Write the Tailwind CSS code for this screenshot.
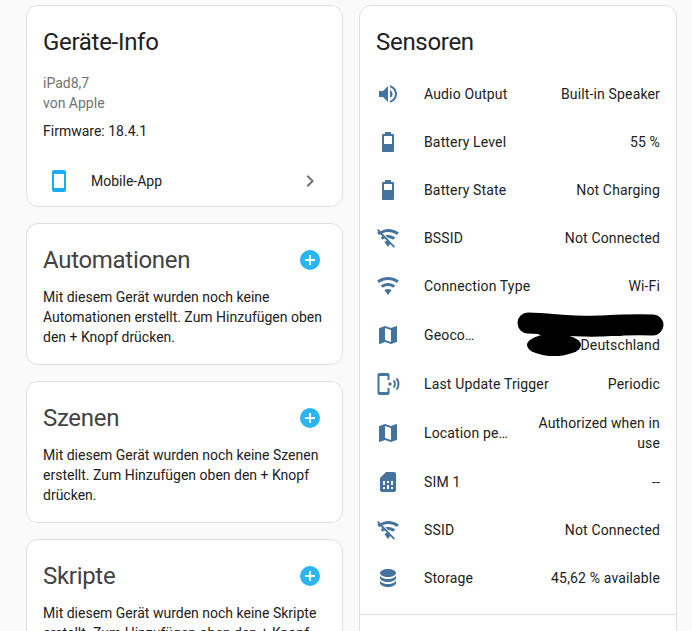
<!DOCTYPE html>
<html lang="de">
<head>
  <meta charset="UTF-8">
  <title>Geräte-Info</title>
  <script src="https://cdn.jsdelivr.net/npm/@tailwindcss/browser@4"></script>
</head>
<body class="bg-[#fafafa] h-[631px] overflow-hidden font-['Roboto',sans-serif] text-sm leading-5 text-[#212121]">
  <div class="grid grid-cols-[317px_318px] gap-4 pl-[26px] pt-[5px] items-start">

    <!-- Left column -->
    <div class="flex flex-col gap-4">
      <section class="bg-white border border-[#e0e0e0] rounded-xl h-[202px] px-4 pt-5">
        <h2 class="text-2xl leading-8 tracking-[-0.3px] text-[#212121]">Geräte-Info</h2>
        <div class="mt-[15px] text-[#727272]">iPad8,7</div>
        <div class="text-[#727272]">von Apple</div>
        <div class="mt-2">Firmware: 18.4.1</div>
        <div class="flex items-center h-12 mt-4">
          <svg class="w-6 h-6 ml-1 fill-[#18aef5]" viewBox="0 0 24 24"><path d="M17,19H7V5H17M17,1H7C5.89,1 5,1.89 5,3V21A2,2 0 0,0 7,23H17A2,2 0 0,0 19,21V3C19,1.89 18.1,1 17,1Z"/></svg>
          <span class="ml-5 flex-1">Mobile-App</span>
          <svg class="w-6 h-6 mr-1 fill-[#727272]" viewBox="0 0 24 24"><path d="M8.59,16.58L13.17,12L8.59,7.41L10,6L16,12L10,18L8.59,16.58Z"/></svg>
        </div>
      </section>

      <section class="bg-white border border-[#e0e0e0] rounded-xl h-[142px] px-4 pt-5">
        <div class="flex items-center justify-between">
          <h2 class="text-2xl leading-8 tracking-[-0.3px] text-[#424242]">Automationen</h2>
          <svg class="w-6 h-6 mr-1 fill-[#29b6f6]" viewBox="0 0 24 24"><circle cx="12" cy="12" r="10"/><path class="fill-white" d="M11 7h2v4h4v2h-4v4h-2v-4H7v-2h4z"/></svg>
        </div>
        <p class="mt-[11px]">Mit diesem Gerät wurden noch keine Automationen erstellt. Zum Hinzufügen oben den + Knopf drücken.</p>
      </section>

      <section class="bg-white border border-[#e0e0e0] rounded-xl h-[142px] px-4 pt-5">
        <div class="flex items-center justify-between">
          <h2 class="text-2xl leading-8 tracking-[-0.3px] text-[#424242]">Szenen</h2>
          <svg class="w-6 h-6 mr-1 fill-[#29b6f6]" viewBox="0 0 24 24"><circle cx="12" cy="12" r="10"/><path class="fill-white" d="M11 7h2v4h4v2h-4v4h-2v-4H7v-2h4z"/></svg>
        </div>
        <p class="mt-[11px]">Mit diesem Gerät wurden noch keine Szenen erstellt. Zum Hinzufügen oben den + Knopf drücken.</p>
      </section>

      <section class="bg-white border border-[#e0e0e0] rounded-xl h-[142px] px-4 pt-5">
        <div class="flex items-center justify-between">
          <h2 class="text-2xl leading-8 tracking-[-0.3px] text-[#424242]">Skripte</h2>
          <svg class="w-6 h-6 mr-1 fill-[#29b6f6]" viewBox="0 0 24 24"><circle cx="12" cy="12" r="10"/><path class="fill-white" d="M11 7h2v4h4v2h-4v4h-2v-4H7v-2h4z"/></svg>
        </div>
        <p class="mt-[11px]">Mit diesem Gerät wurden noch keine Skripte erstellt. Zum Hinzufügen oben den + Knopf drücken.</p>
      </section>
    </div>

    <!-- Sensoren -->
    <section class="relative bg-white border border-[#e0e0e0] rounded-xl h-[700px] pt-5">
      <h2 class="text-2xl leading-8 px-4 tracking-[-0.3px] text-[#212121]">Sensoren</h2>
      <div class="mt-3 px-4 tracking-[0.15px]">
        <div class="flex items-center min-h-12">
          <svg class="w-6 h-6 shrink-0 fill-[#44739e]" viewBox="0 0 24 24"><path d="M14,3.23V5.29C16.89,6.15 19,8.83 19,12C19,15.17 16.89,17.84 14,18.7V20.77C18,19.86 21,16.28 21,12C21,7.72 18,4.14 14,3.23M16.5,12C16.5,10.23 15.5,8.71 14,7.97V16C15.5,15.29 16.5,13.76 16.5,12M3,9V15H7L12,20V4L7,9H3Z"/></svg>
          <span class="ml-6 flex-1">Audio Output</span>
          <span class="text-right">Built-in Speaker</span>
        </div>
        <div class="flex items-center min-h-12">
          <svg class="w-6 h-6 shrink-0 fill-[#44739e]" viewBox="0 0 24 24"><path d="M16,14H8V6H16M16.67,4H15V2H9V4H7.33A1.33,1.33 0 0,0 6,5.33V20.67C6,21.4 6.6,22 7.33,22H16.67C17.41,22 18,21.41 18,20.67V5.33C18,4.6 17.4,4 16.67,4Z"/></svg>
          <span class="ml-6 flex-1">Battery Level</span>
          <span class="text-right">55 %</span>
        </div>
        <div class="flex items-center min-h-12">
          <svg class="w-6 h-6 shrink-0 fill-[#44739e]" viewBox="0 0 24 24"><path d="M16,12H8V6H16M16.67,4H15V2H9V4H7.33A1.33,1.33 0 0,0 6,5.33V20.67C6,21.4 6.6,22 7.33,22H16.67C17.41,22 18,21.41 18,20.67V5.33C18,4.6 17.4,4 16.67,4Z"/></svg>
          <span class="ml-6 flex-1">Battery State</span>
          <span class="text-right">Not Charging</span>
        </div>
        <div class="flex items-center min-h-12">
          <svg class="w-6 h-6 shrink-0 fill-[#44739e]" viewBox="0 0 24 24"><path d="M2.28,3L1,4.27L2.47,5.74C2.04,6 1.61,6.29 1.2,6.6L3,9C3.43,8.68 3.87,8.39 4.33,8.13L6.5,10.3C5.91,10.63 5.35,11 4.8,11.4L6.6,13.8C7.22,13.33 7.9,12.93 8.6,12.6L10.85,14.85C10,15.1 9.2,15.5 8.4,16L12,21L14.11,18.11L17.73,21.73L19,20.46L2.28,3M12,3C9.27,3 6.78,3.9 4.11,5.5L6.19,7.57C8,6.5 10,6 12,6C15.38,6 18.5,7.11 21,9L22.8,6.6C19.79,4.34 16.06,3 12,3M12,9C11.09,9 10.22,9.12 9.38,9.32L12.08,12C13.76,12 15.8,12.79 17.4,13.8L19.2,11.4C17.2,9.89 14.7,9 12,9Z"/></svg>
          <span class="ml-6 flex-1">BSSID</span>
          <span class="text-right">Not Connected</span>
        </div>
        <div class="flex items-center min-h-12">
          <svg class="w-6 h-6 shrink-0 fill-[#44739e]" viewBox="0 0 24 24"><path d="M12,21L15.6,16.2C14.6,15.45 13.35,15 12,15C10.65,15 9.4,15.45 8.4,16.2L12,21M12,3C7.95,3 4.21,4.34 1.2,6.6L3,9C5.5,7.12 8.62,6 12,6C15.38,6 18.5,7.12 21,9L22.8,6.6C19.79,4.34 16.05,3 12,3M12,9C9.3,9 6.81,9.89 4.8,11.4L6.6,13.8C8.1,12.67 9.97,12 12,12C14.03,12 15.9,12.67 17.4,13.8L19.2,11.4C17.19,9.89 14.7,9 12,9Z"/></svg>
          <span class="ml-6 flex-1">Connection Type</span>
          <span class="text-right">Wi-Fi</span>
        </div>
        <div class="flex items-center min-h-12 py-[5px]">
          <svg class="w-6 h-6 shrink-0 fill-[#44739e]" viewBox="0 0 24 24"><path d="M15,19L9,16.89V5L15,7.11M20.5,3C20.44,3 20.39,3 20.34,3L15,5.1L9,3L3.36,4.9C3.15,4.97 3,5.15 3,5.38V20.5A0.5,0.5 0 0,0 3.5,21C3.55,21 3.61,21 3.66,20.97L9,18.9L15,21L20.64,19.1C20.85,19 21,18.85 21,18.62V3.5A0.5,0.5 0 0,0 20.5,3Z"/></svg>
          <span class="ml-6 w-[52px] truncate">Geocoded Location</span>
          <span class="flex-1 text-right"><br>Deutschland</span>
        </div>
        <div class="flex items-center min-h-12">
          <svg class="w-6 h-6 shrink-0 fill-[#44739e]" viewBox="0 0 24 24"><path d="M3.500 1h8a2 2 0 0 1 2 2v5h-2V4H3.500v16h8v-4h2v5a2 2 0 0 1-2 2h-8a2 2 0 0 1-2-2V3a2 2 0 0 1 2-2z"/><circle cx="14" cy="12" r="1.700"/><path class="fill-none stroke-[#44739e] stroke-2" d="M17.500 8.500a5 5 0 0 1 0 7M20.500 6.500a8.500 8.500 0 0 1 0 11"/></svg>
          <span class="ml-6 flex-1">Last Update Trigger</span>
          <span class="text-right">Periodic</span>
        </div>
        <div class="flex items-center min-h-12 py-[5px]">
          <svg class="w-6 h-6 shrink-0 fill-[#44739e]" viewBox="0 0 24 24"><path d="M15,19L9,16.89V5L15,7.11M20.5,3C20.44,3 20.39,3 20.34,3L15,5.1L9,3L3.36,4.9C3.15,4.97 3,5.15 3,5.38V20.5A0.5,0.5 0 0,0 3.5,21C3.55,21 3.61,21 3.66,20.97L9,18.9L15,21L20.64,19.1C20.85,19 21,18.85 21,18.62V3.5A0.5,0.5 0 0,0 20.5,3Z"/></svg>
          <span class="ml-6 w-[85px] truncate">Location permission</span>
          <span class="ml-auto w-[125px] text-right">Authorized when in use</span>
        </div>
        <div class="flex items-center min-h-12">
          <svg class="w-6 h-6 shrink-0 fill-[#44739e]" viewBox="0 0 24 24"><path d="M20 4C20 2.900 19.100 2 18 2H10L4 8V20C4 21.100 4.900 22 6 22H18C19.100 22 20 21.100 20 20V4M9 19H7V17H9V19M17 19H15V17H17V19M9 15H7V11H9V15M13 19H11V15H13V19M13 13H11V11H13V13M17 15H15V11H17V15Z"/></svg>
          <span class="ml-6 flex-1">SIM 1</span>
          <span class="text-right">--</span>
        </div>
        <div class="flex items-center min-h-12">
          <svg class="w-6 h-6 shrink-0 fill-[#44739e]" viewBox="0 0 24 24"><path d="M2.28,3L1,4.27L2.47,5.74C2.04,6 1.61,6.29 1.2,6.6L3,9C3.43,8.68 3.87,8.39 4.33,8.13L6.5,10.3C5.91,10.63 5.35,11 4.8,11.4L6.6,13.8C7.22,13.33 7.9,12.93 8.6,12.6L10.85,14.85C10,15.1 9.2,15.5 8.4,16L12,21L14.11,18.11L17.73,21.73L19,20.46L2.28,3M12,3C9.27,3 6.78,3.9 4.11,5.5L6.19,7.57C8,6.5 10,6 12,6C15.38,6 18.5,7.11 21,9L22.8,6.6C19.79,4.34 16.06,3 12,3M12,9C11.09,9 10.22,9.12 9.38,9.32L12.08,12C13.76,12 15.8,12.79 17.4,13.8L19.2,11.4C17.2,9.89 14.7,9 12,9Z"/></svg>
          <span class="ml-6 flex-1">SSID</span>
          <span class="text-right">Not Connected</span>
        </div>
        <div class="flex items-center min-h-12">
          <svg class="w-6 h-6 shrink-0 fill-[#44739e]" viewBox="0 0 24 24"><path d="M12,3C7.58,3 4,4.79 4,7C4,9.21 7.58,11 12,11C16.42,11 20,9.21 20,7C20,4.79 16.42,3 12,3M4,9V12C4,14.21 7.58,16 12,16C16.42,16 20,14.21 20,12V9C20,11.21 16.42,13 12,13C7.58,13 4,11.21 4,9M4,14V17C4,19.21 7.58,21 12,21C16.42,21 20,19.21 20,17V14C20,16.21 16.42,18 12,18C7.58,18 4,16.21 4,14Z"/></svg>
          <span class="ml-6 flex-1">Storage</span>
          <span class="text-right">45,62 % available</span>
        </div>
      </div>
      <div class="mt-3 border-t border-[#e0e0e0]"></div>

      <!-- Blacked-out part of the address, drawn by hand over the text -->
      <svg class="absolute left-[155px] top-[304px] w-[150px] h-[50px]" viewBox="0 0 150 50">
        <path class="fill-none stroke-black stroke-[21px]" stroke-linecap="round" d="M13 13C40 14 60 17 85 16C105 15 120 14 138 15"/>
        <path class="fill-none stroke-black stroke-[12px]" stroke-linecap="round" d="M28 20H105"/>
        <ellipse cx="39" cy="35" rx="27" ry="11"/>
      </svg>
    </section>
  </div>
</body>
</html>
